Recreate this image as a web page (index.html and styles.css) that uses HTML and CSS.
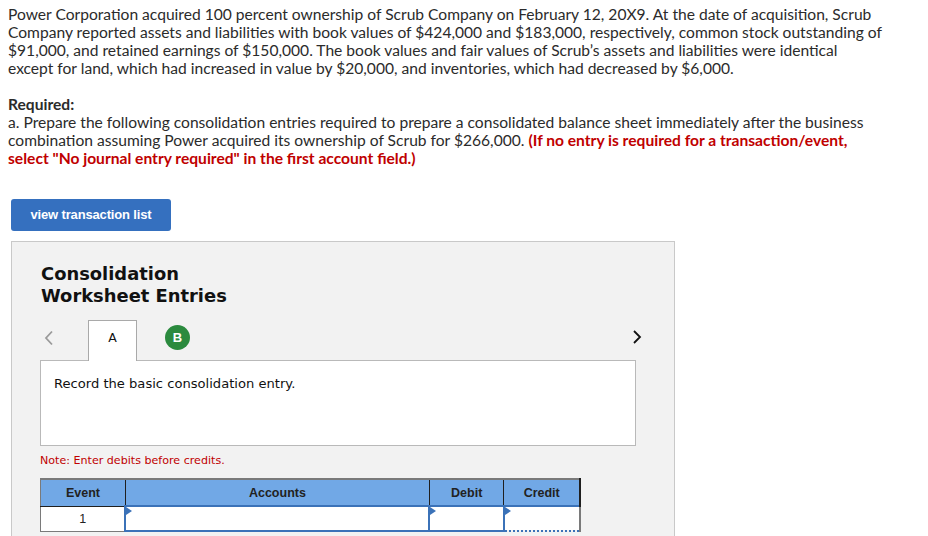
FILE: index.html
```html
<!DOCTYPE html>
<html>
<head>
<meta charset="utf-8">
<link rel="stylesheet" href="styles.css">
</head>
<body>
<div class="question">
  <p class="intro">Power Corporation acquired 100 percent ownership of Scrub Company on February 12, 20X9. At the date of acquisition, Scrub Company reported assets and liabilities with book values of $424,000 and $183,000, respectively, common stock outstanding of $91,000, and retained earnings of $150,000. The book values and fair values of Scrub’s assets and liabilities were identical except for land, which had increased in value by $20,000, and inventories, which had decreased by $6,000.</p>
  <p class="req"><strong>Required:</strong><br>a. Prepare the following consolidation entries required to prepare a consolidated balance sheet immediately after the business combination assuming Power acquired its ownership of Scrub for $266,000. <span class="warn">(If no entry is required for a transaction/event, select "No journal entry required" in the first account field.)</span></p>
</div>
<button class="list-btn">view transaction list</button>
<div class="panel">
  <h2 class="panel-title">Consolidation<br>Worksheet Entries</h2>
  <div class="tabs">
    <span class="nav prev">
      <svg width="10" height="16" viewBox="0 0 10 16"><path d="M8 1.5 L2 8 L8 14.5" fill="none" stroke="#9a9a9a" stroke-width="1.8"/></svg>
    </span>
    <span class="tab active">A</span>
    <span class="tab-b"><span class="circle">B</span></span>
    <span class="spacer"></span>
    <span class="nav next">
      <svg width="10" height="16" viewBox="0 0 10 16"><path d="M2 2 L8 8 L2 14" fill="none" stroke="#111" stroke-width="1.8"/></svg>
    </span>
  </div>
  <div class="content-box">Record the basic consolidation entry.</div>
  <p class="note">Note: Enter debits before credits.</p>
  <table class="entries">
    <thead>
      <tr><th class="c-event">Event</th><th class="c-acc">Accounts</th><th class="c-deb">Debit</th><th class="c-cred">Credit</th></tr>
    </thead>
    <tbody>
      <tr><td class="c-event">1</td><td class="inp"><span class="flag"></span></td><td class="inp"><span class="flag"></span></td><td class="inp dotted"><span class="flag"></span></td></tr>
    </tbody>
  </table>
</div>
</body>
</html>
```
FILE: styles.css
```css
html, body {
  margin: 0;
  padding: 0;
  background: #fff;
}
body {
  padding: 0 8px;
  font-family: Lato, "Open Sans", sans-serif;
  color: #333;
  overflow: hidden;
  height: 536px;
}
.question {
  width: 876px;
  font-size: 15.6px;
  line-height: 18px;
  color: #2b2b2b;
}
.intro {
  margin: 5px 0 0;
}
.req {
  margin: 18px 0 0;
}
.req strong {
  font-weight: 700;
}
.warn {
  color: #c00000;
  font-weight: 700;
}
.list-btn {
  display: block;
  margin: 32px 0 0 3px;
  width: 160px;
  height: 32px;
  background: #3570bf;
  border: none;
  border-radius: 3px;
  color: #fff;
  font-family: "Liberation Sans", Arial, sans-serif;
  font-weight: 700;
  font-size: 13px;
  letter-spacing: -0.15px;
  padding: 0 0 2px;
}
.panel {
  margin: 10px 0 0 3px;
  width: 664px;
  height: 320px;
  background: #f2f2f2;
  border: 1px solid #c9c9c9;
  box-sizing: border-box;
  padding: 0 0 0 28px;
  font-family: "DejaVu Sans", Verdana, sans-serif;
}
.panel-title {
  margin: 21px 0 0 1px;
  font-size: 17.9px;
  line-height: 22px;
  font-weight: 700;
  color: #111;
}
.tabs {
  display: flex;
  align-items: flex-end;
  margin-top: 12px;
  height: 41px;
  width: 596px;
}
.nav {
  display: flex;
  align-items: center;
  height: 41px;
  padding-bottom: 10px;
  box-sizing: border-box;
}
.prev {
  margin-left: 4px;
  width: 44px;
  align-self: flex-start;
  padding-top: 6px;
}
.tab {
  width: 49px;
  height: 41px;
  box-sizing: border-box;
  border: 1px solid #a9a9a9;
  border-bottom: none;
  background: #fff;
  display: flex;
  justify-content: center;
  align-items: flex-start;
  padding-top: 9px;
  font-size: 12.5px;
  color: #111;
  position: relative;
  z-index: 1;
  margin-bottom: -1px;
}
.tab-b {
  align-self: flex-start;
  margin-left: 28px;
  padding-top: 6px;
}
.circle {
  display: flex;
  width: 25px;
  height: 25px;
  border-radius: 50%;
  background: #2b8a3e;
  color: #fff;
  font-family: "Liberation Sans", Arial, sans-serif;
  font-weight: 700;
  font-size: 13px;
  align-items: center;
  justify-content: center;
}
.spacer {
  flex: 1;
}
.next {
  align-self: flex-start;
  padding-top: 4px;
  margin-right: -6px;
}
.content-box {
  width: 596px;
  height: 86px;
  box-sizing: border-box;
  background: #fff;
  border: 1px solid #b9b9b9;
  padding: 15px 13px 13px;
  font-size: 13.1px;
  color: #111;
}
.note {
  margin: 8px 0 0;
  font-size: 11.1px;
  color: #c00000;
}
.entries {
  margin-top: 11px;
  border-collapse: collapse;
  width: 541px;
  font-family: "Liberation Sans", Arial, sans-serif;
  font-size: 12.5px;
}
.entries th {
  background: #71a8e6;
  color: #222;
  font-weight: 700;
  height: 25px;
  padding: 0;
  border: 1px solid #1f1f1f;
  border-top: 2px solid #7a7a7a;
  border-left-color: #7a7a7a;
}
.entries th:last-child {
  border-right: 2px solid #1f1f1f;
}
.c-event { width: 84px; }
.c-acc { width: 306px; }
.c-deb { width: 74px; }
.c-cred { width: 75px; }
.entries td {
  height: 23px;
  padding: 0;
  background: #fff;
  border-left: 1px solid #7a7a7a;
  border-bottom: 1px solid #7a7a7a;
  color: #222;
}
.entries td.c-event {
  text-align: center;
}
.entries td.inp {
  border: 2px solid #3b72b8;
  position: relative;
}
.entries td.inp.dotted {
  border-bottom: 2px dotted #3b72b8;
  border-right: 2px solid #7a7a7a;
}
.flag {
  position: absolute;
  left: 0;
  top: 0;
  width: 0;
  height: 0;
  border-top: 4px solid transparent;
  border-bottom: 4px solid transparent;
  border-left: 6px solid #3b72b8;
}
```
